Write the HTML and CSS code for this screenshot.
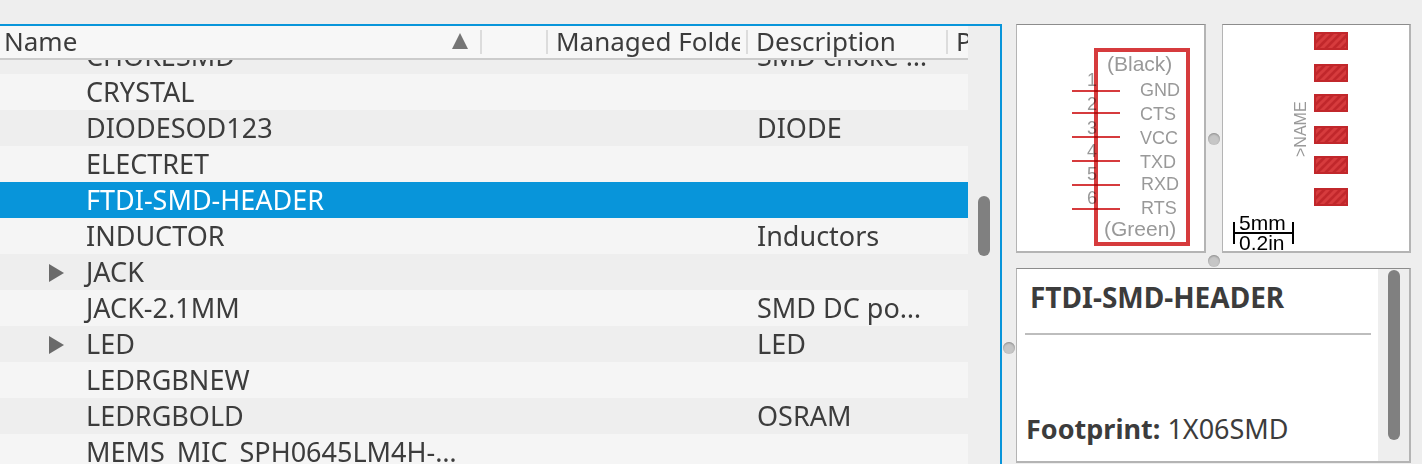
FILE: index.html
```html
<!DOCTYPE html>
<html lang="en">
<head>
    <meta charset="UTF-8">
    <meta name="viewport" content="width=device-width, initial-scale=1.0">
    <title>Add Part</title>
    <link rel="stylesheet" href="styles.css">
</head>
<body>
    <main class="split">
        <section class="list">
            <table class="parts">
                <colgroup>
                    <col class="col-name">
                    <col class="col-flag">
                    <col class="col-folder">
                    <col class="col-desc">
                    <col>
                </colgroup>
                <thead>
                    <tr>
                        <th><div class="head head-first">Name
                            <svg class="sort" viewBox="0 0 16 16"><path d="M8 0 L16 16 L0 16 Z"/></svg>
                        </div></th>
                        <th><div class="head"></div></th>
                        <th><div class="head"><span class="clip">Managed Folder</span></div></th>
                        <th><div class="head">Description</div></th>
                        <th><div class="head">P</div></th>
                    </tr>
                </thead>
                <tbody>
                    <tr class="partial"><td><div>CHOKESMD</div></td><td></td><td></td><td><div>SMD choke …</div></td><td></td></tr>
                    <tr><td>CRYSTAL</td><td></td><td></td><td></td><td></td></tr>
                    <tr><td>DIODESOD123</td><td></td><td></td><td>DIODE</td><td></td></tr>
                    <tr><td>ELECTRET</td><td></td><td></td><td></td><td></td></tr>
                    <tr class="selected"><td>FTDI-SMD-HEADER</td><td></td><td></td><td></td><td></td></tr>
                    <tr><td>INDUCTOR</td><td></td><td></td><td>Inductors</td><td></td></tr>
                    <tr class="group"><td>JACK</td><td></td><td></td><td></td><td></td></tr>
                    <tr><td>JACK-2.1MM</td><td></td><td></td><td>SMD DC po…</td><td></td></tr>
                    <tr class="group"><td>LED</td><td></td><td></td><td>LED</td><td></td></tr>
                    <tr><td>LEDRGBNEW</td><td></td><td></td><td></td><td></td></tr>
                    <tr><td>LEDRGBOLD</td><td></td><td></td><td>OSRAM</td><td></td></tr>
                    <tr><td>MEMS_MIC_SPH0645LM4H-…</td><td></td><td></td><td></td><td></td></tr>
                </tbody>
            </table>
            <div class="track list-track"><div class="thumb list-thumb"></div></div>
        </section>

        <div class="gutter main-gutter"><span class="grip"></span></div>

        <section class="details">
            <div class="previews">
                <div class="panel">
                    <svg class="drawing" viewBox="0 0 187 226">
                        <g class="label">
                            <text x="80" y="61" text-anchor="end">1</text>
                            <text x="80" y="85" text-anchor="end">2</text>
                            <text x="80" y="109" text-anchor="end">3</text>
                            <text x="80" y="132" text-anchor="end">4</text>
                            <text x="80" y="155" text-anchor="end">5</text>
                            <text x="80" y="179" text-anchor="end">6</text>
                            <text x="123" y="71">GND</text>
                            <text x="123" y="95">CTS</text>
                            <text x="123" y="119">VCC</text>
                            <text x="123" y="143">TXD</text>
                            <text x="124" y="165">RXD</text>
                            <text x="124" y="189">RTS</text>
                            <text class="big" x="90" y="46">(Black)</text>
                            <text class="big" x="87" y="211">(Green)</text>
                        </g>
                        <path class="pins" d="M55 66H103 M55 88H103 M55 112H103 M55 136H103 M55 160H103 M55 184H103"/>
                        <rect class="body" x="79" y="25" width="92" height="194"/>
                    </svg>
                </div>
                <div class="gutter"><span class="grip"></span></div>
                <div class="panel">
                    <svg class="drawing" viewBox="0 0 186 226">
                        <defs>
                            <pattern id="hatch" width="8" height="8" patternUnits="userSpaceOnUse">
                                <path d="M-2 2L2 -2 M-2 10L10 -2 M6 10L10 6" stroke="#d63b3d" stroke-width="3"/>
                            </pattern>
                            <g id="pad">
                                <rect width="34" height="18" fill="#c1272b"/>
                                <rect x="2" y="2" width="30" height="14" fill="url(#hatch)"/>
                            </g>
                        </defs>
                        <use href="#pad" x="91" y="7"/>
                        <use href="#pad" x="91" y="39"/>
                        <use href="#pad" x="91" y="69"/>
                        <use href="#pad" x="91" y="101"/>
                        <use href="#pad" x="91" y="131"/>
                        <use href="#pad" x="91" y="163"/>
                        <g class="label"><text class="name" transform="translate(83 132) rotate(-90)">&gt;NAME</text></g>
                        <path class="scale" d="M10 208H71 M11 197V219 M70 197V219"/>
                        <text class="scale-text" x="16" y="205">5mm</text>
                        <text class="scale-text" x="16" y="225">0.2in</text>
                    </svg>
                </div>
            </div>

            <div class="gutter"><span class="grip"></span></div>

            <div class="panel info">
                <div class="info-text">
                    <h1>FTDI-SMD-HEADER</h1>
                    <p><b>Footprint:</b> 1X06SMD</p>
                </div>
                <div class="track info-track"><div class="thumb info-thumb"></div></div>
            </div>
        </section>
    </main>
</body>
</html>
```

FILE: styles.css
```css
* { box-sizing: border-box; }
body {
    margin: 0;
    height: 100vh;
    overflow: hidden;
    background: #eeeeee;
    color: #3c3c3c;
    font-family: "Noto Sans", sans-serif;
    font-size: 27px;
    line-height: 36px;
}
.split {
    display: grid;
    grid-template-columns: minmax(0, 1fr) 14px 395px;
    height: 100%;
    padding: 24px 11px 0 0;
}

/* part list */
.list {
    display: flex;
    min-width: 0;
    overflow: hidden;
    border-top: 2px solid #0895da;
    border-right: 2px solid #0895da;
}
.parts {
    flex: 1;
    width: 0;
    height: 0;
    table-layout: fixed;
    border-collapse: collapse;
}
.col-name { width: 480px; }
.col-flag { width: 66px; }
.col-folder { width: 200px; }
.col-desc { width: 200px; }
th, td {
    padding: 0;
    font-weight: normal;
    text-align: left;
    white-space: nowrap;
    overflow: hidden;
}
th {
    background: #f7f7f7;
    border-bottom: 2px solid #cccccc;
    font-size: 26px;
}
.head {
    display: flex;
    align-items: center;
    height: 24px;
    margin: 4px 0;
    padding: 0 0 2px 8px;
    border-left: 2px solid #dcdcdc;
}
.head-first {
    justify-content: space-between;
    padding: 0 12px 2px 4px;
    border: none;
}
.clip {
    flex: 1;
    margin-right: 6px;
    overflow: hidden;
}
.sort {
    width: 16px;
    height: 16px;
    fill: #757575;
}
td {
    height: 36px;
    padding-left: 11px;
}
td:first-child { padding-left: 86px; }
tbody tr { background: #f5f5f5; }
tbody tr:nth-child(odd) { background: #eeeeee; }
tbody tr.selected {
    background: #0895da;
    color: white;
    font-weight: 500;
}
/* first row is scrolled half under the header */
.partial td { height: 14px; }
.partial div {
    display: flex;
    align-items: flex-end;
    height: 14px;
    overflow: hidden;
}
.group td:first-child::before {
    content: "";
    display: inline-block;
    margin: 0 22px 0 -37px;
    border: solid transparent;
    border-width: 9px 0 9px 15px;
    border-left-color: #6a6a6a;
}

/* scroll bars */
.track { background: #eeeeee; }
.thumb {
    width: 12px;
    border-radius: 6px;
    background: #808080;
}
.list-track {
    width: 32px;
    padding: 170px 0 0 10px;
}
.list-thumb { height: 60px; }
.info-track {
    width: 31px;
    padding: 1px 0 0 10px;
}
.info-thumb { height: 170px; }

/* splitters */
.gutter {
    display: flex;
    align-items: center;
    justify-content: center;
}
.main-gutter {
    align-items: flex-end;
    padding-bottom: 110px;
}
.grip {
    width: 12px;
    height: 12px;
    border-radius: 50%;
    background: #c6c6c6;
    box-shadow: inset 0 1px 2px #8c8c8c;
}

/* previews and info */
.details {
    display: grid;
    grid-template-rows: 229px 15px minmax(0, 1fr);
    padding-bottom: 1px;
}
.previews {
    display: grid;
    grid-template-columns: 190fr 16px 189fr;
}
.panel {
    min-width: 0;
    background: white;
    border: solid #b4b4b4;
    border-width: 1px 2px 2px 1px;
    border-top-color: #8c8c8c;
}
.drawing {
    display: block;
    width: 100%;
    height: 100%;
}
.label {
    fill: #999999;
    font-family: "Liberation Sans", sans-serif;
    font-size: 18px;
}
.label .big { font-size: 21px; }
.label .name { font-size: 16px; }
.pins, .body {
    fill: none;
    stroke: #d63b3d;
    stroke-width: 2;
}
.body {
    stroke-width: 4;
    mix-blend-mode: multiply;
}
.scale {
    stroke: black;
    stroke-width: 2;
}
.scale-text {
    font-family: "Liberation Sans", sans-serif;
    font-size: 21px;
}
.info { display: flex; }
.info-text {
    flex: 1;
    padding: 10px 7px 0 8px;
}
.info h1 {
    margin: 0;
    padding: 0 5px 18px;
    border-bottom: 2px solid #bdbdbd;
    font-size: 28px;
    line-height: 36px;
}
.info p { margin: 76px 0 0 1px; }
```
